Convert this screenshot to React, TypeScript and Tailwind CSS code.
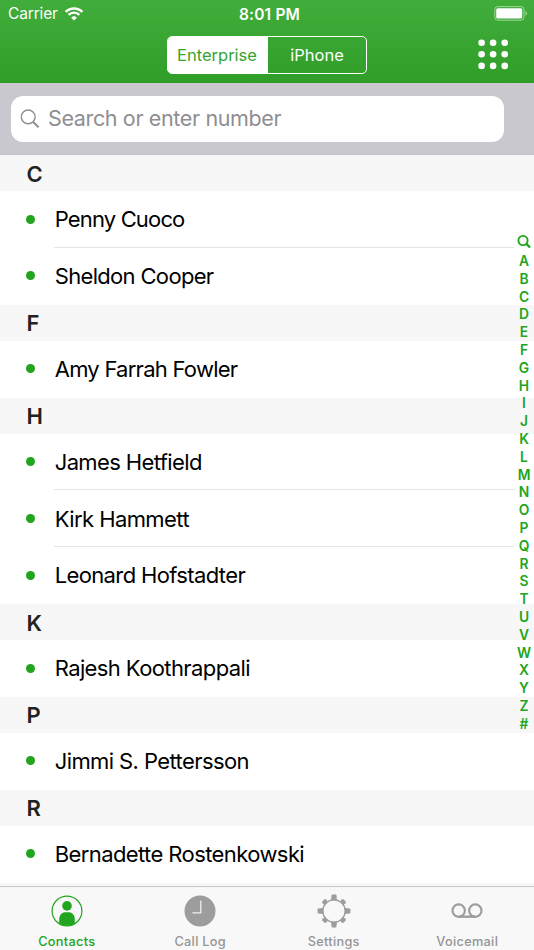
import React from "react";

const sections = [
  { letter: "C", people: [{ name: "Penny Cuoco", track: "tracking-[-0.84px]" }, { name: "Sheldon Cooper", track: "tracking-[-0.67px]" }] },
  { letter: "F", people: [{ name: "Amy Farrah Fowler", track: "tracking-[-0.74px]" }] },
  {
    letter: "H",
    people: [
      { name: "James Hetfield", track: "tracking-[-0.62px]" },
      { name: "Kirk Hammett", track: "tracking-[-0.58px]" },
      { name: "Leonard Hofstadter", track: "tracking-[-0.63px]" },
    ],
  },
  { letter: "K", people: [{ name: "Rajesh Koothrappali", track: "tracking-[-0.6px]" }] },
  { letter: "P", people: [{ name: "Jimmi S. Pettersson", track: "tracking-[-0.59px]" }] },
  { letter: "R", people: [{ name: "Bernadette Rostenkowski", track: "tracking-[-0.59px]" }] },
];

const indexLetters = "ABCDEFGHIJKLMNOPQRSTUVWXYZ#".split("");

function WifiIcon() {
  return (
    <svg width="18" height="14" viewBox="0 0 18 14" fill="none">
      <path d="M0.7 4.9A11.6 11.6 0 0 1 17.3 4.9" stroke="#fff" strokeWidth="2.5" />
      <path d="M3.6 7.9A7.5 7.5 0 0 1 14.4 7.9" stroke="#fff" strokeWidth="2.3" />
      <path d="M9 13.6L6.1 10.7A4.1 4.1 0 0 1 11.9 10.7Z" fill="#fff" />
    </svg>
  );
}

function BatteryIcon() {
  return (
    <svg width="34" height="16" viewBox="0 0 34 16" fill="none">
      <rect x="0.8" y="0.6" width="29.2" height="13.6" rx="3" stroke="#fff" strokeOpacity="0.5" strokeWidth="1" />
      <rect x="2.2" y="2.2" width="26" height="10.4" rx="1.6" fill="#fff" />
      <path d="M31.5 5C33.3 5.9 33.3 8.9 31.5 9.8Z" fill="#fff" fillOpacity="0.6" />
    </svg>
  );
}

function KeypadIcon() {
  return (
    <svg width="32" height="32" viewBox="0 0 32 32" fill="#fff">
      {[3.7, 15.3, 26.9].map((y) => [4.6, 16.1, 27.7].map((x) => <circle key={`${x}-${y}`} cx={x} cy={y} r="3.3" />))}
    </svg>
  );
}

function ContactsIcon() {
  return (
    <svg width="32" height="32" viewBox="0 0 32 32">
      <circle cx="16" cy="16" r="14.9" fill="none" stroke="#22a51e" strokeWidth="1.2" />
      <circle cx="16" cy="10.9" r="4.8" fill="#22a51e" />
      <path d="M8.2 28.7V24.5C8.2 19.8 11 17.2 14.5 17.2H17.5C21 17.2 23.8 19.8 23.8 24.5V28.7Q16 33 8.2 28.7Z" fill="#22a51e" />
    </svg>
  );
}

function ClockIcon() {
  return (
    <svg width="32" height="32" viewBox="0 0 32 32" fill="none">
      <circle cx="16" cy="16" r="15.5" fill="#9d9d9d" />
      <path d="M16.8 5.8V17.8H8.5" stroke="#f0f0f0" strokeWidth="1.3" />
    </svg>
  );
}

function GearIcon() {
  return (
    <svg width="34" height="34" viewBox="0 0 34 34" fill="none">
      <circle cx="17" cy="17" r="11.2" stroke="#9d9d9d" strokeWidth="1.3" />
      {[0, 90, 180, 270].map((a) => (
        <path key={a} d="M14 6.2L14.6 1.2Q14.7 .6 15.3 .6H18.7Q19.3 .6 19.4 1.2L20 6.2Z" fill="#9d9d9d" transform={`rotate(${a} 17 17)`} />
      ))}
      {[45, 135, 225, 315].map((a) => (
        <path key={a} d="M15.4 6.4L14.3 4.2Q14 3.5 14.4 3L15.4 2H18.6L19.6 3Q20 3.5 19.7 4.2L18.6 6.4Z" fill="#9d9d9d" transform={`rotate(${a} 17 17)`} />
      ))}
    </svg>
  );
}

function VoicemailIcon() {
  return (
    <svg width="32" height="16" viewBox="0 0 32 16" fill="none" stroke="#9d9d9d">
      <circle cx="7.7" cy="7.6" r="6.2" strokeWidth="2.2" />
      <circle cx="24.3" cy="7.6" r="6.2" strokeWidth="2.2" />
      <path d="M7.7 13.7H24.3" strokeWidth="2.4" />
    </svg>
  );
}

const tabs = [
  { label: "Contacts", icon: <ContactsIcon />, color: "text-[#22a51e]" },
  { label: "Call Log", icon: <ClockIcon />, color: "text-[#959595]" },
  { label: "Settings", icon: <GearIcon />, color: "text-[#959595]" },
  { label: "Voicemail", icon: <VoicemailIcon />, color: "text-[#959595]" },
];

function Header() {
  return (
    <header className="h-[83px] shrink-0 bg-linear-to-b from-[#41ad3a] to-[#309d29] text-white">
      <div className="grid h-7 grid-cols-3 items-center">
        <div className="flex items-center gap-[7px] pl-2 text-[15.5px] tracking-[-0.15px]">
          Carrier
          <WifiIcon />
        </div>
        <div className="pt-px pl-[5px] text-center text-[15.5px] font-semibold tracking-[0.2px]">8:01 PM</div>
        <div className="flex justify-end pr-[6px]">
          <BatteryIcon />
        </div>
      </div>
      <div className="grid h-[54px] grid-cols-[1fr_200px_1fr] items-center">
        <div />
        <div className="flex h-[38px] overflow-hidden rounded-[5px] border border-white text-[16.5px]">
          <div className="flex w-[100px] items-center justify-center bg-white pr-[2px] text-[#35a42f]">Enterprise</div>
          <div className="flex flex-1 items-center justify-center">iPhone</div>
        </div>
        <div className="flex justify-end pr-[25px]">
          <KeypadIcon />
        </div>
      </div>
    </header>
  );
}

function SearchBar() {
  return (
    <div className="h-[72px] shrink-0 border-b border-[#c4c4c8] bg-[#c9c8ce] pt-[13px] pr-[30px] pl-[11px]">
      <div className="flex h-[46px] items-center rounded-[12px] bg-white pl-[9px] text-[#8e8e93]">
        <svg width="20" height="20" viewBox="0 0 20 20" fill="none" stroke="#8e8e93">
          <circle cx="8.2" cy="7.9" r="6.9" strokeWidth="1.4" />
          <path d="M12.9 12.7L18.6 18.2" strokeWidth="2" />
        </svg>
        <span className="ml-2 pb-[2px] text-[21.5px] tracking-[-0.36px]">Search or enter number</span>
      </div>
    </div>
  );
}

function ContactList() {
  return (
    <main className="relative min-h-0 flex-1 overflow-hidden">
      {sections.map((s) => (
        <section key={s.letter}>
          <h2 className="flex h-9 items-center bg-[#f7f7f7] pt-[2px] pl-[26.5px] text-[22px] font-semibold text-[#222]">{s.letter}</h2>
          {s.people.map((p, i) => (
            <div key={p.name} className="flex h-[56.85px] items-center pl-[26px]">
              <span className="mr-[19px] mb-[0.8px] size-[9px] shrink-0 rounded-full bg-[#22a51e]" />
              <div className={`mr-5 flex h-full flex-1 items-center border-b pt-[1.6px] pl-[0.7px] text-[22px] text-black ${p.track} ${i < s.people.length - 1 ? "border-[#e5e5e7]" : "border-transparent"}`}>
                {p.name}
              </div>
            </div>
          ))}
        </section>
      ))}
      <div className="h-9 bg-[#f7f7f7]" />
      <nav className="absolute top-[78px] right-0 flex w-5 flex-col items-center text-[13.8px] font-semibold text-[#22a51e]">
        <svg className="mb-[2px]" width="14" height="18" viewBox="0 0 14 18" fill="none" stroke="#22a51e">
          <circle cx="6" cy="7.5" r="4.6" strokeWidth="1.9" />
          <path d="M9.2 10.7L13 14.5" strokeWidth="2.4" />
        </svg>
        {indexLetters.map((l) => (
          <span key={l} className="h-[17.8px] leading-[17.8px]">{l}</span>
        ))}
      </nav>
    </main>
  );
}

function TabBar() {
  return (
    <footer className="grid h-16 shrink-0 grid-cols-4 border-t border-[#c8c8c8] bg-[#f8f8f8]">
      {tabs.map((t) => (
        <div key={t.label} className={`flex flex-col items-center pt-[7px] text-[12.75px] leading-4 font-medium tracking-[0.3px] ${t.color}`}>
          <div className="flex h-[34px] items-center">{t.icon}</div>
          <span className="mt-[6px]">{t.label}</span>
        </div>
      ))}
    </footer>
  );
}

export default function App() {
  return (
    <div className="flex h-[950px] w-[534px] flex-col overflow-hidden bg-white font-[Inter,'Liberation_Sans',sans-serif]">
      <Header />
      <SearchBar />
      <ContactList />
      <TabBar />
    </div>
  );
}
